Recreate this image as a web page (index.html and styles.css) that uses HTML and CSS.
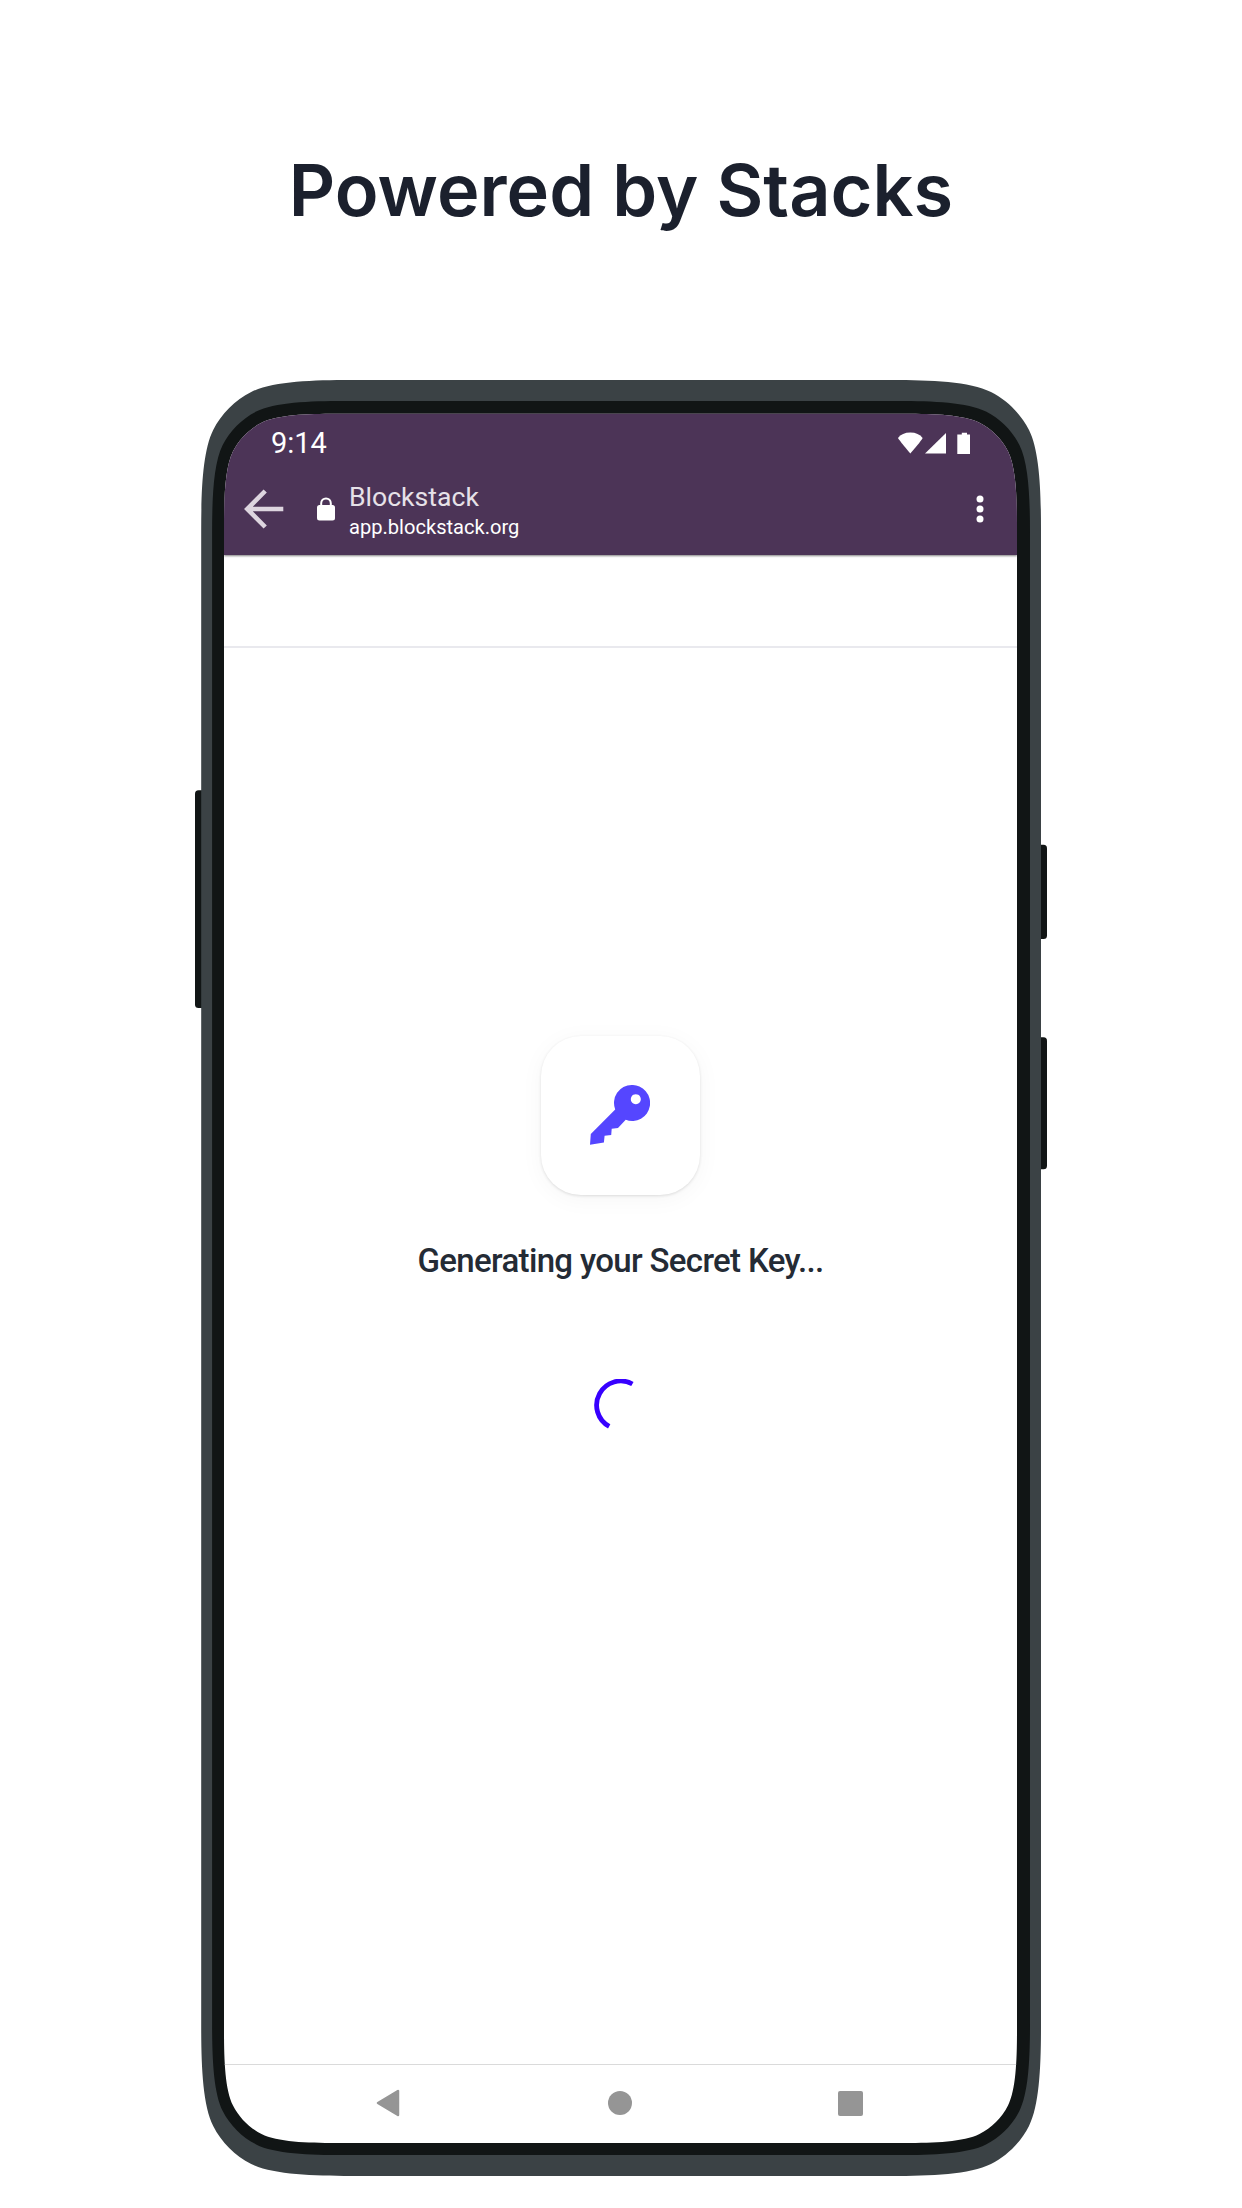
FILE: index.html
```html
<!DOCTYPE html>
<html lang="en">
<head>
<meta charset="utf-8">
<title>Powered by Stacks</title>
<link rel="stylesheet" href="styles.css">
</head>
<body>
<main class="page">
  <h1 class="title">Powered by Stacks</h1>
  <div class="device">
    <svg class="shell" width="852" height="1797" viewBox="195 380 852 1797" aria-hidden="true">
      <g fill="#111515">
        <rect x="195" y="790.3" width="14" height="217.7" rx="3.5"/>
        <rect x="1033" y="844.7" width="14" height="94.3" rx="3.5"/>
        <rect x="1033" y="1037.3" width="14" height="132" rx="3.5"/>
      </g>
      <path fill="#3b4245" d="M201.2 530c0-40 1.5-79 12-100 8-16 22-30 38-38 21-10.5 60-12 100-12H891c40 0 79 1.5 100 12 16 8 30 22 38 38 10.5 21 12 60 12 100V2026c0 40-1.5 79-12 100-8 16-22 30-38 38-21 10.5-60 12-100 12H351.2c-40 0-79-1.5-100-12-16-8-30-22-38-38-10.5-21-12-60-12-100Z"/>
      <path fill="#111515" d="M212.1 533c0-35.2 1.3-69.5 10.6-88 7-14 19.4-26.4 33.4-33.4 18.5-9.3 52.8-10.6 88-10.6H898c35.2 0 69.5 1.3 88 10.6 14 7 26.4 19.4 33.4 33.4 9.3 18.5 10.6 52.8 10.6 88V2023c0 35.2-1.3 69.5-10.6 88-7 14-19.4 26.4-33.4 33.4-18.5 9.3-52.8 10.6-88 10.6H344.1c-35.2 0-69.5-1.3-88-10.6-14-7-26.4-19.4-33.4-33.4-9.3-18.5-10.6-52.8-10.6-88Z"/>
    </svg>
    <div class="screen">
      <header class="appbar">
        <div class="status">
          <span class="clock">9:14</span>
          <svg width="73" height="23" viewBox="0 0 73 23" fill="#fff" aria-hidden="true">
            <path d="M0 6Q4 .5 12.3.5T24.6 6Q24 8 12.3 21.5Q1 8 0 6Z"/>
            <path d="M27 21.5L48 1V21.5Z"/>
            <path d="M59.3 2.5H63.8V.7H69V2.5H72V22H59.3Z"/>
          </svg>
        </div>
        <div class="toolbar">
          <svg class="back" width="40" height="40" viewBox="0 0 40 40" fill="none" stroke="#ddd5df" stroke-width="4.6" aria-hidden="true">
            <path d="M39.3 20H4M21.2 2L3.3 20L21.2 38"/>
          </svg>
          <svg class="lock" width="18" height="24" viewBox="0 0 18 24" aria-hidden="true">
            <rect y="8" width="18" height="15.5" rx="2.5" fill="#fff"/>
            <path d="M4.2 9V6.2a4.8 4.8 0 0 1 9.6 0V9" fill="none" stroke="#fff" stroke-width="2"/>
          </svg>
          <div class="site">
            <span class="name">Blockstack</span>
            <span class="url">app.blockstack.org</span>
          </div>
          <svg class="more" width="8" height="28" viewBox="0 0 8 28" fill="#fff" aria-hidden="true">
            <circle cx="4" cy="4" r="3.5"/><circle cx="4" cy="14" r="3.5"/><circle cx="4" cy="24" r="3.5"/>
          </svg>
        </div>
      </header>
      <div class="strip"></div>
      <section class="content">
        <div class="card">
          <svg width="60" height="60" viewBox="0 0 60 60" aria-hidden="true">
            <path fill="#5546ff" fill-rule="evenodd" d="M41.7 0a17.8 18 0 1 1-6 34.7L28 43l-6.3.7-.5 6.2-6.6.8-.7 6.8L0 59.7.8 49 25.2 24.5A17.8 18 0 0 1 41.7 0ZM45.8 9.2a5 5 0 1 0 .01 0Z"/>
          </svg>
        </div>
        <p class="message">Generating your Secret Key...</p>
        <svg class="spinner" width="54" height="54" viewBox="0 0 54 54" fill="none" stroke="#3700ff" stroke-width="4.8" aria-hidden="true">
          <path d="M38.4 5A24 24 0 1 0 15.2 47.4"/>
        </svg>
      </section>
      <nav class="navbar">
        <svg width="24" height="28" viewBox="0 0 24 28" aria-hidden="true"><path d="M2 14L22 2V26Z" fill="#959595" stroke="#959595" stroke-width="2.5" stroke-linejoin="round"/></svg>
        <svg class="home" width="24" height="24" viewBox="0 0 24 24" aria-hidden="true"><circle cx="12" cy="12" r="12" fill="#959595"/></svg>
        <svg width="25" height="25" viewBox="0 0 25 25" aria-hidden="true"><rect width="25" height="25" rx="2" fill="#959595"/></svg>
      </nav>
    </div>
  </div>
</main>
</body>
</html>
```
FILE: styles.css
```css
* { box-sizing: border-box; }
body { margin: 0; background: #fff; }
.page {
  width: 1242px;
  height: 2208px;
  display: flex;
  flex-direction: column;
  align-items: center;
  overflow: hidden;
}
.title {
  margin: 146px 0 0;
  height: 234px;
  font: 600 72px/88px Inter, sans-serif;
  letter-spacing: .03px;
  color: #1b202d;
  white-space: nowrap;
}
.device { display: grid; width: 852px; flex: none; }
.shell { grid-area: 1 / 1; display: block; }
.screen {
  grid-area: 1 / 1;
  position: relative;
  margin: 33px 0 0 29px;
  width: 793px;
  height: 1730px;
  display: flex;
  flex-direction: column;
  background: #fff;
  font-family: Roboto, sans-serif;
  clip-path: path("M0 113.3c0 -30 1.1 -59.2 9 -75c6 -12 16.5 -22.5 28.5 -28.5c15.8 -7.9 45 -9 75 -9H680.5c30 0 59.2 1.1 75 9c12 6 22.5 16.5 28.5 28.5c7.9 15.8 9 45 9 75V1617.5c0 30 -1.1 59.2 -9 75c-6 12 -16.5 22.5 -28.5 28.5c-15.8 7.9 -45 9 -75 9H112.5c-30 0 -59.2 -1.1 -75 -9c-12 -6 -22.5 -16.5 -28.5 -28.5c-7.9 -15.8 -9 -45 -9 -75Z");
}
.appbar {
  height: 142px;
  flex: none;
  background: #4c3457;
  color: #fff;
  box-shadow: 0 1px 2px rgba(0, 0, 0, .5);
}
.status {
  height: 48px;
  padding: 13px 46px 0 47px;
  display: flex;
  align-items: center;
  justify-content: space-between;
}
.clock { font-size: 29px; line-height: 34px; padding-bottom: 1px; }
.toolbar {
  height: 94px;
  padding: 2px 33.5px 0 20px;
  display: flex;
  align-items: center;
}
.lock { margin: 0 14px 0 33px; }
.site { display: flex; flex-direction: column; flex: 1; padding-top: 4px; }
.name { font-size: 26.6px; line-height: 32px; color: #e6e1e8; }
.url { font-size: 20.1px; line-height: 28px; }
.strip { height: 93px; flex: none; border-bottom: 2px solid #e9e9ee; }
.content {
  flex: 1;
  padding-top: 387.5px;
  display: flex;
  flex-direction: column;
  align-items: center;
}
.card {
  width: 159px;
  height: 159px;
  flex: none;
  display: flex;
  align-items: center;
  justify-content: center;
  border-radius: 40px;
  background: #fff;
  box-shadow: 0 1px 3px rgba(0, 0, 0, .12), 0 4px 24px rgba(0, 0, 0, .04);
}
.card svg { margin: 0 1px 1px 0; }
.message {
  margin: 46.5px 0 0;
  font-size: 33px;
  line-height: 40px;
  font-weight: 500;
  letter-spacing: -.66px;
  color: #242b35;
  white-space: nowrap;
}
.spinner { margin-top: 98px; }
.navbar {
  height: 79px;
  flex: none;
  border-top: 1px solid #dadada;
  padding: 0 154px 2px 152px;
  display: flex;
  align-items: center;
  justify-content: space-between;
}
.home { margin-left: 2px; }
```
